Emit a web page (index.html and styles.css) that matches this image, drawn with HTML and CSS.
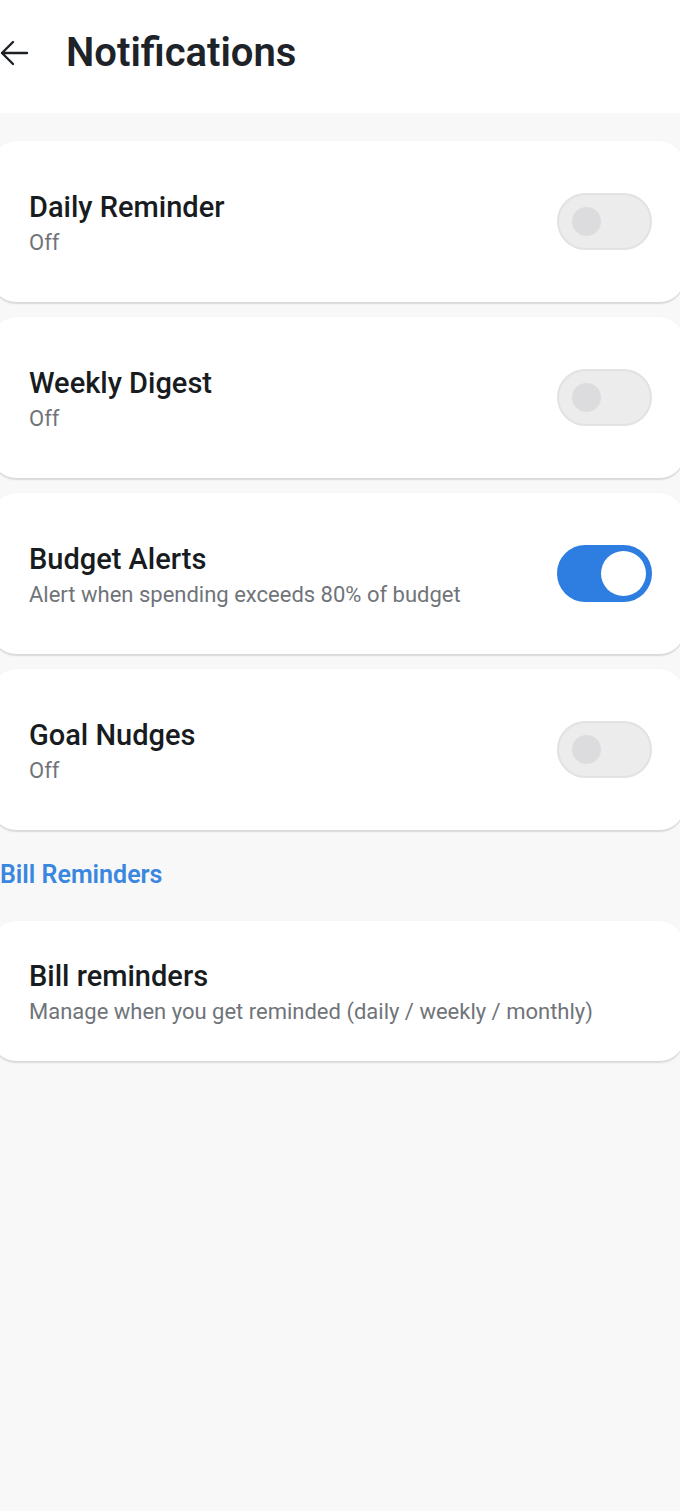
FILE: index.html
```html
<!DOCTYPE html>
<html>
<head>
<meta charset="utf-8">
<link rel="stylesheet" href="styles.css">
</head>
<body>
<header class="topbar">
  <svg class="back" width="30" height="30" viewBox="0 0 30 30"><path d="M28 15H3M14 4L3 15l11 11" fill="none" stroke="#1d2126" stroke-width="2.4" stroke-linecap="round" stroke-linejoin="round"/></svg>
  <h1 class="title">Notifications</h1>
</header>
<main class="content">
  <section class="card">
    <div class="text"><div class="name">Daily Reminder</div><div class="sub">Off</div></div>
    <div class="toggle"><span class="thumb"></span></div>
  </section>
  <section class="card">
    <div class="text"><div class="name">Weekly Digest</div><div class="sub">Off</div></div>
    <div class="toggle"><span class="thumb"></span></div>
  </section>
  <section class="card">
    <div class="text"><div class="name">Budget Alerts</div><div class="sub">Alert when spending exceeds 80% of budget</div></div>
    <div class="toggle on"><span class="thumb"></span></div>
  </section>
  <section class="card">
    <div class="text"><div class="name">Goal Nudges</div><div class="sub">Off</div></div>
    <div class="toggle"><span class="thumb"></span></div>
  </section>
  <h2 class="section">Bill Reminders</h2>
  <section class="card short">
    <div class="text"><div class="name">Bill reminders</div><div class="sub">Manage when you get reminded (daily / weekly / monthly)</div></div>
  </section>
</main>
</body>
</html>
```
FILE: styles.css
```css
html, body {
  margin: 0;
  padding: 0;
}
body {
  background: #f8f8f8;
  font-family: Roboto, "Liberation Sans", sans-serif;
  min-height: 1511px;
  overflow: hidden;
}
.topbar {
  background: #ffffff;
  height: 113px;
  display: flex;
  align-items: center;
  padding-left: 0;
  box-sizing: border-box;
}
.back {
  margin-left: -1px;
  margin-top: -8px;
}
.title {
  margin: -8px 0 0 37px;
  font-size: 40px;
  font-weight: 600;
  color: #1d2328;
  letter-spacing: 0;
}
.content {
  display: flex;
  flex-direction: column;
  gap: 15px;
  padding-top: 28px;
  margin: 0 -4px 0 -8px;
}
.card {
  background: #ffffff;
  border-radius: 24px;
  height: 161px;
  box-sizing: border-box;
  display: flex;
  align-items: center;
  justify-content: space-between;
  padding: 0 32px 0 37px;
  box-shadow: 0 1.5px 1.5px rgba(0,0,0,0.12), 0 0 1px rgba(0,0,0,0.05);
}
.card.short {
  height: 140px;
}
.text {
  display: flex;
  flex-direction: column;
  padding-top: 3px;
}
.name {
  font-size: 29px;
  font-weight: 500;
  color: #181c21;
  line-height: 36px;
}
.sub {
  font-size: 22px;
  color: #707479;
  line-height: 30px;
  margin-top: 3px;
}
.toggle {
  width: 95px;
  height: 57px;
  border-radius: 29px;
  background: #ececec;
  border: 2px solid #e2e2e2;
  box-sizing: border-box;
  display: flex;
  align-items: center;
  padding-left: 13px;
}
.toggle .thumb {
  width: 29px;
  height: 29px;
  border-radius: 50%;
  background: #dcdcde;
}
.toggle.on {
  background: #2e7de0;
  border-color: #2e7de0;
  justify-content: flex-end;
  padding: 0 4px 0 0;
}
.toggle.on .thumb {
  width: 45px;
  height: 45px;
  background: #ffffff;
}
.section {
  margin: 14px 0 15px 8px;
  font-size: 25px;
  font-weight: 600;
  color: #3a87df;
  line-height: 32px;
}
```
